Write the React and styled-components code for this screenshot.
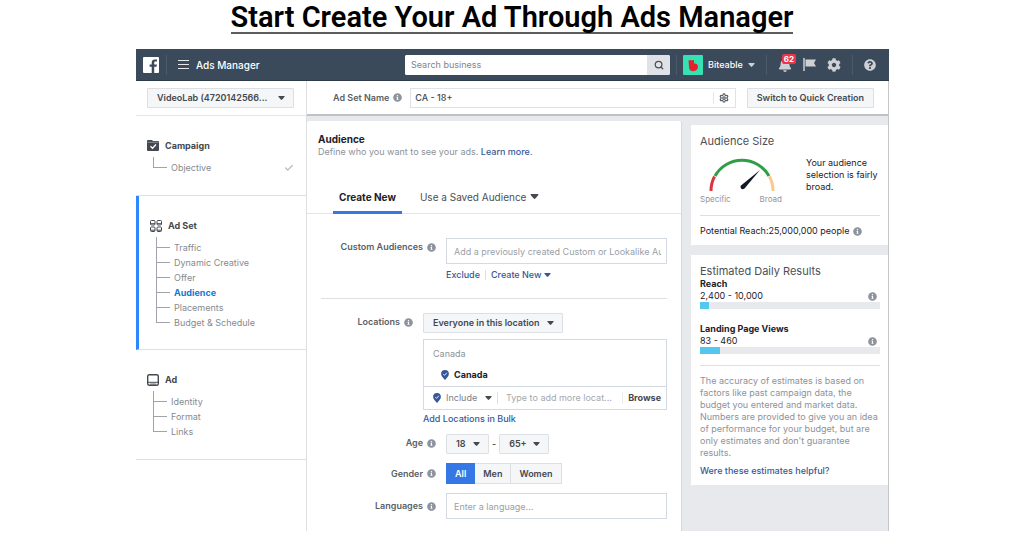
import React, { useId, useState } from "react";
import styled, { createGlobalStyle } from "styled-components";
import { FaBell, FaCog, FaQuestionCircle, FaInfoCircle } from "react-icons/fa";
import { Search, Check, Settings } from "lucide-react";

const Global = createGlobalStyle`
  * { box-sizing: border-box; }
  body { margin: 0; background: #fff; font-family: Inter, "Liberation Sans", sans-serif; font-size: 9px; line-height: 12px; color: #1d2129; }
  button, input, select { font: inherit; color: inherit; margin: 0; }
  h1, h2, h3, p, ul { margin: 0; padding: 0; }
  ul { list-style: none; }
  svg { display: block; flex: none; }
`;

const Title = styled.h1`
  padding: 2px 0 15px;
  text-align: center;
  font: 600 29px/30px Roboto, sans-serif;
  color: #000;
  span { display: inline-block; border-bottom: 2px solid #5c5c5c; }
`;

const Window = styled.div`
  margin: 0 135px 6px 136px;
  border-right: 1px solid #c4c6ca;
`;

const TopBar = styled.header`
  display: grid;
  grid-template-columns: 269px minmax(0, 1fr) 219px;
  align-items: center;
  height: 32px;
  margin-right: -1px;
  background: #3b4a5a;
  border-bottom: 1px solid #2e3b49;
  color: #fff;
`;

const Group = styled.div`
  display: flex;
  align-items: center;
`;

const Brand = styled(Group)`
  padding-left: 7px;
  gap: 7px;
  > :nth-child(3) { margin-left: 4px; }
`;

const Rule = styled.span`
  flex: none;
  width: 1px;
  height: ${(p) => p.$h || 20}px;
  background: ${(p) => p.$color || "#4b5a69"};
`;

const AppName = styled.span`
  font-size: 10px;
  font-weight: 500;
`;

const SearchBox = styled.form`
  display: flex;
  height: 20px;
  border-radius: 2px;
  overflow: hidden;
  background: #fff;
  input {
    flex: 1;
    min-width: 0;
    border: 0;
    padding: 0 6px;
    background: #fff;
    color: #1d2129;
    &::placeholder { color: #7f858e; opacity: 1; }
  }
  button {
    display: grid;
    place-items: center;
    width: 23px;
    border: 0;
    padding: 0;
    background: #dfe2e6;
    color: #4b5058;
  }
`;

const Tools = styled(Group)`
  padding: 0 10px 0 6px;
  gap: 11px;
`;

const IconButton = styled.button`
  position: relative;
  display: flex;
  align-items: center;
  gap: 6px;
  border: 0;
  padding: 0;
  background: none;
  color: ${(p) => p.$color || "#ced0d4"};
  font-weight: 500;
`;

const ProfileButton = styled(IconButton)`
  margin-left: -5px;
  gap: 5px;
  color: #fff;
`;

const NameOptions = styled(IconButton)`
  padding: 0 6px 0 5px;
  color: #5a5f67;
`;

const Badge = styled.span`
  position: absolute;
  left: 4px;
  top: -4px;
  padding: 0 2px;
  border-radius: 2px;
  background: #e8364a;
  color: #fff;
  font-size: 8px;
  font-weight: 700;
  line-height: 10px;
`;

const Columns = styled.div`
  display: grid;
  grid-template-columns: 171px minmax(0, 1fr);
`;

const Sidebar = styled.nav`
  border-right: 1px solid #dddfe2;
`;

const AccountBar = styled.div`
  height: 35px;
  padding: 7px 12px 0 11px;
  border-bottom: 1px solid #e3e5e8;
`;

const SelectWrap = styled.div`
  position: relative;
  width: ${(p) => p.$width || "100%"};
  select {
    display: block;
    appearance: none;
    width: 100%;
    height: 20px;
    border: 1px solid #dcdfe4;
    border-radius: 1px;
    padding: 0 9px;
    background: #f5f6f8;
    color: #444950;
    font-weight: 600;
  }
  svg { position: absolute; right: 9px; top: 8px; pointer-events: none; }
`;

const Section = styled.section`
  height: ${(p) => p.$height}px;
  padding: 22px 12px 0 11px;
  border-bottom: 1px solid #dddfe2;
  border-left: ${(p) => (p.$active ? "3px solid #2d88ff" : "0")};
`;

const SectionTitle = styled.h2`
  display: flex;
  align-items: center;
  gap: 6px;
  height: 15px;
  color: #444950;
  font-size: 9px;
  font-weight: 700;
`;

const Tree = styled.ul`
  margin: 0 0 0 6px;
  padding-top: 7px;
  position: relative;
  &::before {
    content: "";
    position: absolute;
    left: 0;
    top: 4px;
    bottom: 7px;
    border-left: 1px solid #a0a4aa;
  }
`;

const Leaf = styled.li`
  display: flex;
  align-items: center;
  height: 15px;
  color: #b4b8be;
  &::before { content: ""; width: 14px; margin-right: 4px; border-top: 1px solid #a0a4aa; }
  a {
    flex: 1;
    text-decoration: none;
    color: ${(p) => (p.$current ? "#1877d2" : "#858a91")};
    font-weight: ${(p) => (p.$current ? 700 : 400)};
  }
`;

const NameBar = styled.div`
  display: flex;
  align-items: center;
  height: 35px;
  padding: 0 14px 0 26px;
  border-bottom: 2px solid #bfc1c5;
`;

const Label = styled.label`
  display: flex;
  align-items: center;
  justify-content: flex-end;
  gap: 4px;
  height: 18px;
  color: #5a5f67;
  font-weight: 600;
  svg { color: #8d949e; }
`;

const NameField = styled.div`
  display: flex;
  flex: 1;
  align-items: center;
  height: 20px;
  margin: 0 11px 0 8px;
  border: 1px solid #dfe2e7;
  input { flex: 1; min-width: 0; border: 0; padding: 0 4px; color: #444950; font-weight: 500; background: none; }
`;

const PlainButton = styled.button`
  height: 20px;
  border: 1px solid #dcdfe4;
  border-radius: 1px;
  padding: 0 9px;
  background: #f5f6f8;
  color: #444950;
  font-weight: 600;
`;

const Workspace = styled.div`
  display: grid;
  grid-template-columns: minmax(0, 1fr) 206px;
  background: #e7e9ec;
  padding-top: 5px;
`;

const Editor = styled.main`
  background: #fff;
  border-right: 1px solid #d5d8dc;
  border-radius: 2px 2px 0 0;
`;

const EditorHead = styled.div`
  padding: 11px 11px 0;
  height: 63px;
  h2 { font-size: 10px; line-height: 14px; font-weight: 700; }
  p { color: #8d9299; }
`;

const Link = styled.a`
  display: inline-flex;
  align-items: center;
  gap: 3px;
  color: #365899;
  text-decoration: none;
  font-weight: 500;
`;

const Tabs = styled.div`
  display: flex;
  gap: 12px;
  padding: 0 26px;
  height: 30px;
  border-bottom: 1px solid #e3e5e8;
`;

const Tab = styled.button`
  display: flex;
  align-items: center;
  gap: 4px;
  height: 30px;
  padding: 0 6px 2px;
  border: 0;
  border-bottom: 3px solid ${(p) => (p.$on ? "#3578e5" : "transparent")};
  background: none;
  color: ${(p) => (p.$on ? "#1d2129" : "#4b4f56")};
  font-size: 10px;
  font-weight: ${(p) => (p.$on ? 700 : 400)};
`;

const Form = styled.form`
  display: grid;
  gap: 9px;
  padding: 24px 14px 12px;
`;

const Row = styled.div`
  display: grid;
  grid-template-columns: ${(p) => (p.$wide ? 92 : 115)}px minmax(0, 1fr);
  column-gap: 10px;
  align-items: ${(p) => (p.$middle ? "center" : "start")};
`;

const Field = styled.input`
  display: block;
  width: 100%;
  height: 26px;
  border: 1px solid #d3dae3;
  padding: 0 5px 0 7px;
  &::placeholder { color: #9a9fa7; opacity: 1; }
`;

const Links = styled(Group)`
  gap: 5px;
  height: 14px;
  margin-top: 4px;
`;

const Divider = styled.hr`
  width: 100%;
  border: 0;
  border-top: 1px solid #dddfe2;
  margin: ${(p) => p.$space};
`;

const Places = styled.div`
  margin: 6px 0 3px;
  border: 1px solid #d3dae3;
  color: #8d9299;
`;

const PlaceList = styled.div`
  padding: 8px 9px 5px;
  border-bottom: 1px solid #d3dae3;
`;

const Place = styled(Group)`
  gap: 5px;
  padding: 9px 8px 0;
  color: #1d2129;
  font-weight: 700;
`;

const PlaceEntry = styled(Group)`
  height: 22px;
  padding-left: 9px;
  gap: 5px;
  input { flex: 1; min-width: 0; border: 0; padding: 0 0 0 3px; background: none; &::placeholder { color: #a4a8af; opacity: 1; } }
  button { border: 0; background: none; padding: 0 5px 0 0; color: #444950; font-weight: 700; }
`;

const ModeSelect = styled(SelectWrap)`
  select { border: 0; background: none; padding: 0; font-weight: 400; color: #7b8088; }
  svg { right: 0; }
`;

const Ages = styled(Group)`
  gap: 3px;
`;

const Segments = styled.fieldset`
  display: flex;
  justify-self: start;
  margin: 0;
  padding: 0;
  border: 0;
`;

const Segment = styled.label`
  position: relative;
  display: grid;
  place-items: center;
  height: 21px;
  padding: 0 8px;
  border: 1px solid ${(p) => (p.$on ? "#3578e5" : "#dcdfe4")};
  border-left-width: ${(p) => (p.$on ? 1 : 0)}px;
  background: ${(p) => (p.$on ? "#3578e5" : "#f5f6f8")};
  color: ${(p) => (p.$on ? "#fff" : "#444950")};
  font-weight: 600;
  input { position: absolute; inset: 0; margin: 0; opacity: 0; }
`;

const Aside = styled.aside`
  display: grid;
  align-content: start;
  gap: 10px;
  padding: 4px 0 0 9px;
`;

const Card = styled.section`
  padding: 9px 8px 8px 9px;
  background: #fff;
  h2 { font-size: 11px; line-height: 14px; font-weight: 400; color: #4b4f56; }
`;

const GaugeRow = styled(Group)`
  gap: 24px;
  align-items: flex-start;
  padding-top: 9px;
`;

const GaugeScale = styled.div`
  flex: none;
  width: 82px;
  svg { margin-left: 8px; }
  div { display: flex; justify-content: space-between; font-size: 8px; color: #90949c; line-height: 10px; margin-top: 2px; }
`;

const Reach = styled(Group)`
  gap: 4px;
  svg { color: #8d949e; }
`;

const Metric = styled.div`
  margin-bottom: ${(p) => p.$gap}px;
  h3 { font-size: 9px; line-height: 12px; font-weight: 700; }
`;

const MetricValue = styled(Group)`
  justify-content: space-between;
  padding-right: 3px;
  svg { color: #8d949e; }
`;

const Track = styled.div`
  height: 7px;
  background: #e7e9ed;
  div { height: 7px; background: #54c7ec; }
`;

const Note = styled.p`
  color: #8d9299;
  margin-bottom: 6px;
`;

const Caret = ({ size = 7, color = "#444950" }) => (
  <svg width={size} height={Math.round(size * 0.6)} viewBox="0 0 10 6" fill={color} aria-hidden="true">
    <path d="M1 0h8q1.2.3.6 1.300L6 5.400q-1 .9-2 0L.4 1.300Q-.2.3 1 0z" />
  </svg>
);

const Info = () => <FaInfoCircle size={9} aria-hidden="true" />;

const Pin = () => (
  <svg width="8" height="10" viewBox="0 0 14 18" aria-hidden="true">
    <path d="M7 0a7 7 0 0 1 7 7c0 4-4 7-7 11C4 14 0 11 0 7a7 7 0 0 1 7-7z" fill="#365899" />
    <path d="M4 7.500l2.200 2.200L10.200 5" fill="none" stroke="#fff" strokeWidth="1.600" />
  </svg>
);

const Logo = () => (
  <svg width="16" height="16" viewBox="0 0 16 16" aria-hidden="true">
    <rect width="16" height="16" rx="1" fill="#fff" />
    <path d="M8.700 16V9.800H6.600V7.400h2.100V5.600c0-2 1.200-3.200 3.100-3.200h2.200v2.200h-1.500c-1 0-1.300.5-1.300 1.300v1.500h2.700l-.4 2.400h-2.300V16z" fill="#3b4a5a" />
  </svg>
);

const Avatar = () => (
  <svg width="20" height="20" viewBox="0 0 20 20" aria-hidden="true">
    <rect width="20" height="20" rx="1" fill="#36e2b4" />
    <path d="M5.500 5.800q1.800-1.600 3.400-.2.700-.9 2.100-.6V8.600c2.700-.4 4 1 4 3.200 0 2.600-2 4.400-4.600 4.400-3 0-4.400-1.600-4.400-4.200z" fill="#e8202c" />
  </svg>
);

const Flag = () => (
  <svg width="13" height="13" viewBox="0 0 13 13" aria-hidden="true">
    <path d="M1 0v13" stroke="#ced0d4" strokeWidth="1.500" />
    <path d="M2.500 1.500H13L11 5l2 3.500H2.500z" fill="#ced0d4" />
  </svg>
);

const FolderIcon = () => (
  <svg width="12" height="11" viewBox="0 0 12 11" aria-hidden="true">
    <path d="M1 0h4l1 1h5q1 0 1 1v8q0 1-1 1H1q-1 0-1-1V1q0-1 1-1z" fill="#444950" />
    <path d="M.5 2.300h11" stroke="#b9bcc1" strokeWidth=".6" />
    <path d="M3.500 6.300l2 2L9 4.500" fill="none" stroke="#fff" strokeWidth="1.300" />
  </svg>
);

const GridIcon = () => (
  <svg width="12" height="12" viewBox="0 0 12 12" fill="none" stroke="#444950" aria-hidden="true">
    {[[0, 0], [6.500, 0], [0, 6.500], [6.500, 6.500]].map(([x, y]) => (
      <g key={`${x}-${y}`}>
        <rect x={x + 0.5} y={y + 0.5} width="4.500" height="4.500" rx="1" />
        <path d={`M${x + 0.5} ${y + 3.700}h4.500`} />
      </g>
    ))}
  </svg>
);

const AdIcon = () => (
  <svg width="12" height="12" viewBox="0 0 12 12" fill="none" stroke="#444950" aria-hidden="true">
    <rect x=".7" y=".7" width="10.600" height="10.600" rx="1.500" strokeWidth="1.400" />
    <path d="M1 8.300h10" />
    <path d="M3 10h6" strokeWidth=".8" />
  </svg>
);

const MenuIcon = () => (
  <svg width="11" height="9" viewBox="0 0 11 9" stroke="#e4e6ea" strokeWidth="1" aria-hidden="true">
    <path d="M0 .5h11M0 4.500h11M0 8.500h11" />
  </svg>
);

const Gauge = () => (
  <svg width="68" height="35" viewBox="0 0 68 35" fill="none" strokeWidth="3" role="img" aria-label="Audience gauge">
    <path d="M3 34A31 31 0 0 1 6.500 19.500" stroke="#d8353f" />
    <path d="M7 19A31 31 0 0 1 61 19" stroke="#2f9e44" />
    <path d="M61.500 19.500A31 31 0 0 1 65 34" stroke="#fbc78d" />
    <path d="M52 13L36.500 31.500q-2 1.500-3.500 0-1.300-1.600.3-3.200z" fill="#111827" />
  </svg>
);

function Select({ wrap: Wrap = SelectWrap, label, width, children, id }) {
  return (
    <Wrap $width={width}>
      <select id={id} aria-label={label}><option>{children}</option></select>
      <Caret />
    </Wrap>
  );
}

function SideSection({ icon, title, items, current, done, height, active }) {
  return (
    <Section $height={height} $active={active}>
      <SectionTitle>{icon}{title}</SectionTitle>
      <Tree>
        {items.map((item) => (
          <Leaf key={item} $current={item === current}>
            <a href={`#${item}`}>{item}</a>
            {done && <Check size={10} strokeWidth={3} />}
          </Leaf>
        ))}
      </Tree>
    </Section>
  );
}

function FormRow({ label, wide, middle, children }) {
  const id = useId();
  return (
    <Row $wide={wide} $middle={middle}>
      <Label htmlFor={id}>{label}<Info /></Label>
      {children(id)}
    </Row>
  );
}

function Estimate({ name, range, share, gap }) {
  return (
    <Metric $gap={gap}>
      <h3>{name}</h3>
      <MetricValue>{range}<Info /></MetricValue>
      <Track><div style={{ width: `${share}%` }} /></Track>
    </Metric>
  );
}

export default function App() {
  const [gender, setGender] = useState("All");
  return (
    <>
      <Global />
      <Title><span>Start Create Your Ad Through Ads Manager</span></Title>
      <Window>
        <TopBar>
          <Brand>
            <Logo />
            <Rule />
            <MenuIcon />
            <AppName>Ads Manager</AppName>
          </Brand>
          <SearchBox>
            <input aria-label="Search business" placeholder="Search business" />
            <button type="button" aria-label="Search"><Search size={10} strokeWidth={3} /></button>
          </SearchBox>
          <Tools>
            <Rule />
            <ProfileButton><Avatar />Biteable<Caret color="#ced0d4" /></ProfileButton>
            <Rule />
            <IconButton aria-label="Notifications"><FaBell size={14} /><Badge>62</Badge></IconButton>
            <IconButton aria-label="Pages"><Flag /></IconButton>
            <IconButton aria-label="Settings"><FaCog size={14} /></IconButton>
            <Rule />
            <IconButton aria-label="Help"><FaQuestionCircle size={12} /></IconButton>
          </Tools>
        </TopBar>
        <Columns>
          <Sidebar>
            <AccountBar><Select label="Account">VideoLab (4720142566...</Select></AccountBar>
            <SideSection icon={<FolderIcon />} title="Campaign" items={["Objective"]} done height={80} />
            <SideSection
              icon={<GridIcon />}
              title="Ad Set"
              items={["Traffic", "Dynamic Creative", "Offer", "Audience", "Placements", "Budget & Schedule"]}
              current="Audience"
              active
              height={154}
            />
            <SideSection icon={<AdIcon />} title="Ad" items={["Identity", "Format", "Links"]} height={110} />
          </Sidebar>
          <div>
            <NameBar>
              <Label htmlFor="set-name">Ad Set Name<Info /></Label>
              <NameField>
                <input id="set-name" defaultValue="CA - 18+" />
                <Rule $h={12} $color="#e3e5e8" />
                <NameOptions aria-label="Name options"><Settings size={10} strokeWidth={3} /></NameOptions>
              </NameField>
              <PlainButton>Switch to Quick Creation</PlainButton>
            </NameBar>
            <Workspace>
              <Editor>
                <EditorHead>
                  <h2>Audience</h2>
                  <p>Define who you want to see your ads. <Link href="#learn">Learn more.</Link></p>
                </EditorHead>
                <Tabs>
                  <Tab $on>Create New</Tab>
                  <Tab>Use a Saved Audience<Caret size={9} /></Tab>
                </Tabs>
                <Form>
                  <FormRow label="Custom Audiences">
                    {(id) => (
                      <div>
                        <Field id={id} placeholder="Add a previously created Custom or Lookalike Audience" />
                        <Links>
                          <Link href="#exclude">Exclude</Link>
                          <Rule $h={10} $color="#dddfe2" />
                          <Link href="#create">Create New<Caret color="#365899" /></Link>
                        </Links>
                      </div>
                    )}
                  </FormRow>
                  <Divider $space="7px 0 5px" />
                  <FormRow label="Locations" wide>
                    {(id) => (
                      <div>
                        <Select id={id} width="140px">Everyone in this location</Select>
                        <Places>
                          <PlaceList>
                            Canada
                            <Place><Pin />Canada</Place>
                          </PlaceList>
                          <PlaceEntry>
                            <Pin />
                            <Select wrap={ModeSelect} label="Include or exclude" width="46px">Include</Select>
                            <Rule $h={12} $color="#dddfe2" />
                            <input aria-label="Add locations" placeholder="Type to add more locat..." />
                            <Rule $h={12} $color="#e9ebee" />
                            <button type="button">Browse</button>
                          </PlaceEntry>
                        </Places>
                        <Link href="#bulk">Add Locations in Bulk</Link>
                      </div>
                    )}
                  </FormRow>
                  <FormRow label="Age">
                    {(id) => (
                      <Ages>
                        <Select id={id} width="43px">18</Select>-
                        <Select label="Maximum age" width="50px">65+</Select>
                      </Ages>
                    )}
                  </FormRow>
                  <FormRow label="Gender" middle>
                    {(id) => (
                      <Segments>
                        {["All", "Men", "Women"].map((g) => (
                          <Segment key={g} $on={gender === g}>
                            <input id={g === "All" ? id : undefined} type="radio" name="gender" checked={gender === g} onChange={() => setGender(g)} />
                            {g}
                          </Segment>
                        ))}
                      </Segments>
                    )}
                  </FormRow>
                  <FormRow label="Languages" middle>
                    {(id) => <Field id={id} placeholder="Enter a language..." />}
                  </FormRow>
                </Form>
              </Editor>
              <Aside>
                <Card>
                  <h2>Audience Size</h2>
                  <GaugeRow>
                    <GaugeScale><Gauge /><div><span>Specific</span><span>Broad</span></div></GaugeScale>
                    <p>Your audience selection is fairly broad.</p>
                  </GaugeRow>
                  <Divider $space="11px 0 9px" />
                  <Reach>Potential Reach:25,000,000 people<Info /></Reach>
                </Card>
                <Card>
                  <h2>Estimated Daily Results</h2>
                  <Estimate name="Reach" range="2,400 - 10,000" share={5} gap={14} />
                  <Estimate name="Landing Page Views" range="83 - 460" share={11} gap={11} />
                  <Divider $space="0 0 9px" />
                  <Note>
                    The accuracy of estimates is based on factors like past campaign data, the budget you entered and market data. Numbers are provided to give you an idea of performance for your budget, but are only estimates and don't guarantee results.
                  </Note>
                  <Link href="#feedback">Were these estimates helpful?</Link>
                </Card>
              </Aside>
            </Workspace>
          </div>
        </Columns>
      </Window>
    </>
  );
}
